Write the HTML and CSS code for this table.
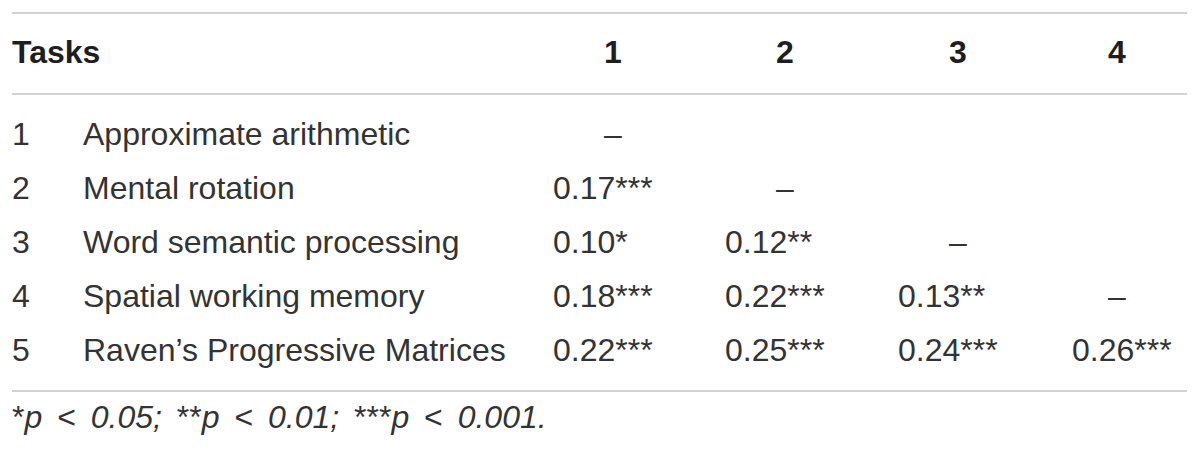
FILE: index.html
```html
<!DOCTYPE html>
<html lang="en">
<head>
<meta charset="utf-8">
<title>Correlations between tasks</title>
<link rel="stylesheet" href="styles.css">
</head>
<body>
<div class="page">
  <table class="corr">
    <colgroup>
      <col class="c-num"><col class="c-label"><col class="c-1"><col class="c-2"><col class="c-3"><col class="c-4">
    </colgroup>
    <thead>
      <tr>
        <th colspan="2" class="tasks">Tasks</th>
        <th><span class="mid">1</span></th>
        <th><span class="mid">2</span></th>
        <th><span class="mid">3</span></th>
        <th><span class="mid last">4</span></th>
      </tr>
    </thead>
    <tbody>
      <tr>
        <td>1</td><td>Approximate arithmetic</td>
        <td><span class="mid">–</span></td><td></td><td></td><td></td>
      </tr>
      <tr>
        <td>2</td><td>Mental rotation</td>
        <td>0.17***</td><td><span class="mid">–</span></td><td></td><td></td>
      </tr>
      <tr>
        <td>3</td><td>Word semantic processing</td>
        <td>0.10*</td><td>0.12**</td><td><span class="mid">–</span></td><td></td>
      </tr>
      <tr>
        <td>4</td><td>Spatial working memory</td>
        <td>0.18***</td><td>0.22***</td><td>0.13**</td><td><span class="mid last">–</span></td>
      </tr>
      <tr>
        <td>5</td><td>Raven’s Progressive Matrices</td>
        <td>0.22***</td><td>0.25***</td><td>0.24***</td><td>0.26***</td>
      </tr>
    </tbody>
  </table>
  <p class="note">*<i>p</i> &lt; <i>0.05;</i> **<i>p</i> &lt; <i>0.01;</i> ***<i>p</i> &lt; <i>0.001.</i></p>
</div>
</body>
</html>
```

FILE: styles.css
```css
html, body {
  margin: 0;
  padding: 0;
  background: #ffffff;
}

.page {
  padding: 12px 0 0 12px;
  width: 1175px;
  font-family: "Liberation Sans", Arial, sans-serif;
  color: #333333;
}

.corr {
  width: 1175px;
  table-layout: fixed;
  border-collapse: separate;
  border-spacing: 0;
  border-top: 2px solid #d2d2d2;
  border-bottom: 2px solid #d2d2d2;
  font-size: 32px;
}

.c-num { width: 71px; }
.c-label { width: 470px; }
.c-1 { width: 172px; }
.c-2 { width: 173px; }
.c-3 { width: 174px; }
.c-4 { width: 115px; }

.corr th {
  text-align: left;
  font-weight: bold;
  color: #1e1e1e;
  line-height: 54px;
  padding: 11px 0 14px 0;
  border-bottom: 2px solid #d2d2d2;
}

.corr td {
  padding: 0;
  line-height: 54px;
  text-align: left;
  white-space: nowrap;
  vertical-align: top;
}

.corr tbody tr:first-child td {
  padding-top: 12px;
}

.corr tbody tr:last-child td {
  padding-bottom: 13px;
}

.mid {
  display: inline-block;
  width: 120px;
  text-align: center;
}

.mid.last {
  width: 90px;
}

.note {
  margin: 5px 0 0 0;
  font-size: 32px;
  line-height: 40px;
  word-spacing: 6px;
  color: #333333;
  white-space: nowrap;
}

.note i {
  font-style: italic;
}
```
